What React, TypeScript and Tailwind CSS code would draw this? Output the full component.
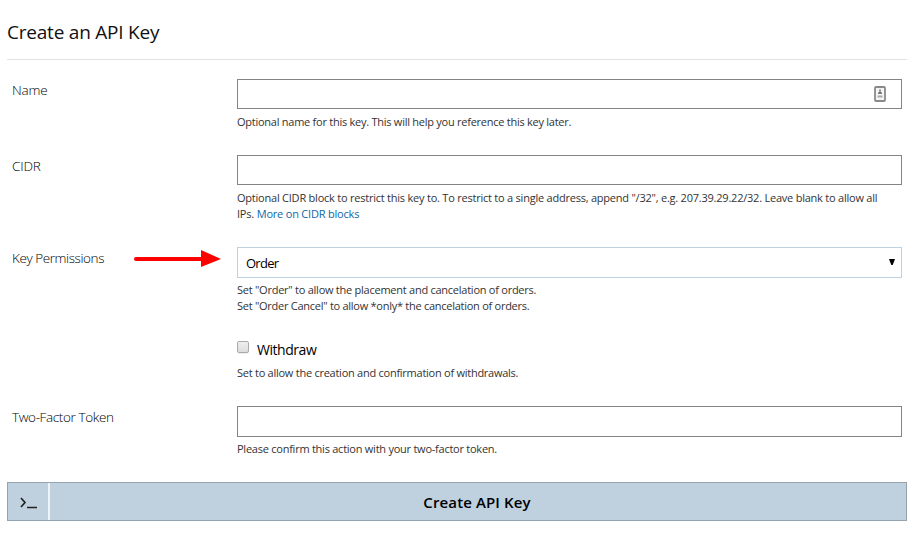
import type { ReactNode } from 'react';

function Row({ label, className, children }: { label?: ReactNode; className: string; children: ReactNode }) {
  return (
    <div className={`flex pr-[5px] pl-[5px] ${className}`}>
      <div className="relative w-[225px] shrink-0 pt-px text-[13.5px] leading-[20px] font-light text-black">{label}</div>
      <div className="w-[665px]">{children}</div>
    </div>
  );
}

function Help({ className = 'mt-[5px]', children }: { className?: string; children: ReactNode }) {
  return <div className={`text-[11px] leading-[16px] whitespace-nowrap text-[#333] ${className}`}>{children}</div>;
}

export default function App() {
  return (
    <div className="h-[534px] w-[911px] overflow-hidden bg-white pl-[7px] font-['Open_Sans','Noto_Sans',sans-serif] text-black">
      <main className="w-[900px]">
        <h1 className="h-[60px] border-b border-[#e2e2e2] pt-[18px] text-[19px] leading-[28px] font-normal tracking-[-0.22px] text-[#111]">Create an API Key</h1>

        <Row label={<span className="tracking-[-0.15px]">Name</span>} className="mt-[19px] h-[76px]">
          <div className="flex h-[30px] items-center justify-end border border-[#848484] pr-[15px]">
            <svg width="12" height="16" viewBox="0 0 12 16" fill="none">
              <rect x="1" y="1" width="10" height="14" rx="1" fill="#f4f4f4" stroke="#8a8a8a" strokeWidth="1.8" />
              <path d="M6 3.200v2.500" stroke="#8a8a8a" strokeWidth="1.6" />
              <path d="M4 8c0-1.600.7-2.600 2-2.600S8 6.400 8 8z" fill="#777" />
              <path d="M3.500 10.500h5" stroke="#aaa" strokeWidth="2" />
            </svg>
          </div>
          <Help>
            <div className="tracking-[-0.255px]">Optional name for this key. This will help you reference this key later.</div>
          </Help>
        </Row>

        <Row label={<span className="tracking-[-0.2px]">CIDR</span>} className="h-[92px]">
          <div className="h-[30px] border border-[#848484]" />
          <Help>
            <div className="tracking-[-0.225px]">Optional CIDR block to restrict this key to. To restrict to a single address, append "/32", e.g. 207.39.29.22/32. Leave blank to allow all</div>
            <div className="tracking-[-0.2px]">IPs. <a className="text-[#0f66a8]">More on CIDR blocks</a></div>
          </Help>
        </Row>

        <Row
          label={
            <>
              <span className="tracking-[-0.42px]">Key Permissions</span>
              <svg className="absolute top-[2px] left-[122px]" width="88" height="20" viewBox="0 0 88 20">
                <path d="M2 10h68" stroke="#f00" strokeWidth="4" strokeLinecap="round" />
                <path d="M67 1l20 9-20 8z" fill="#f00" />
              </svg>
            </>
          }
          className="h-[94px]"
        >
          <div className="flex h-[31px] items-center justify-between border border-[#bfd1df] pr-[6px] pl-[8px]">
            <span className="text-[13px] leading-[20px] font-normal tracking-[-0.75px]">Order</span>
            <svg className="mb-[1px]" width="6" height="6" viewBox="0 0 6 6">
              <path d="M0 0h6L3.700 6H2.300z" />
            </svg>
          </div>
          <Help className="mt-[4px]">
            <div className="tracking-[-0.25px]">Set "Order" to allow the placement and cancelation of orders.</div>
            <div className="tracking-[-0.265px]">Set "Order Cancel" to allow *only* the cancelation of orders.</div>
          </Help>
        </Row>

        <Row className="h-[65px]">
          <div className="flex h-[20px]">
            <span className="h-[12px] w-[12px] rounded-[2px] border border-[#aaa] bg-linear-to-b from-[#eee] to-[#ddd] shadow-[0_1px_0_#eee]" />
            <span className="-mt-px ml-[8px] text-[14px] leading-[20px] tracking-[-0.45px]">Withdraw</span>
          </div>
          <Help className="mt-[4px]">
            <div className="tracking-[-0.255px]">Set to allow the creation and confirmation of withdrawals.</div>
          </Help>
        </Row>

        <Row label={<span className="tracking-[-0.37px]">Two-Factor Token</span>} className="h-[76px]">
          <div className="h-[31px] border border-[#848484]" />
          <Help className="mt-[4px]">
            <div className="tracking-[-0.245px]">Please confirm this action with your two-factor token.</div>
          </Help>
        </Row>

        <button className="flex h-[39px] w-[900px] items-stretch border border-[#93a4b0] bg-[#bfd1df] text-[15px] font-semibold">
          <span className="flex w-[42px] items-center border-r-2 border-[#edf3f7] pt-[2px] pl-[12px]">
            <svg width="17" height="14" viewBox="0 0 17 14" fill="none" stroke="#222" strokeWidth="1.700">
              <path d="M1 2l4 4.500-4 4.500M7 11.500h10" />
            </svg>
          </span>
          <span className="flex flex-1 items-center justify-center pt-px pr-[2px] tracking-[0.12px]">Create API Key</span>
        </button>
      </main>
    </div>
  );
}
